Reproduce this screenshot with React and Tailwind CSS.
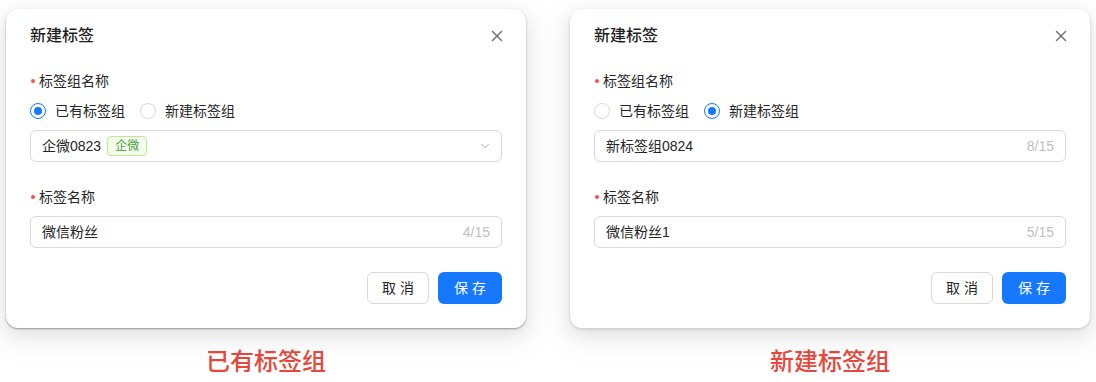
import { X, ChevronDown } from "lucide-react";

const FONT = { fontFamily: '"Liberation Sans", "Noto Sans CJK SC", sans-serif' };

const Radio = ({ checked, label }) => (
  <label className="flex items-center gap-[9px] text-[14px] leading-[22px] text-[#262626]">
    <span
      className={`flex items-center justify-center w-4 h-4 rounded-full border bg-white ${
        checked ? "border-[#1677ff]" : "border-[#d9d9d9]"
      }`}
    >
      {checked && <span className="w-2 h-2 rounded-full bg-[#1677ff]" />}
    </span>
    {label}
  </label>
);

const Label = ({ children }) => (
  <div className="flex items-center h-[22px] text-[14px] text-[#262626]">
    <span className="w-[4px] h-[4px] rounded-full bg-[#ff4d4f] mr-[4px] ml-[1px]" />
    {children}
  </div>
);

const TextInput = ({ value, count }) => (
  <div className="flex items-center justify-between h-8 px-[11px] border border-[#d9d9d9] rounded-md text-[14px] text-[#262626]">
    <span>{value}</span>
    <span className="text-[#bfbfbf]">{count}</span>
  </div>
);

const TagDialog = ({ existing, shadow }) => (
  <div className={`w-[520px] h-[319px] bg-white rounded-[12px] px-6 pt-4 pb-6 ${shadow}`}>
    <div className="flex items-center justify-between h-[22px]">
      <h3 className="text-[16px] font-medium text-[#1f1f1f]">新建标签</h3>
      <X size={18} strokeWidth={2} className="text-[#737373] mr-[-4px]" />
    </div>

    <div className="mt-[23px]">
      <Label>标签组名称</Label>
    </div>
    <div className="flex items-center gap-[15px] mt-2">
      <Radio checked={existing} label="已有标签组" />
      <Radio checked={!existing} label="新建标签组" />
    </div>
    <div className="mt-2">
      {existing ? (
        <div className="flex items-center justify-between h-8 px-[11px] border border-[#d9d9d9] rounded-md text-[14px] text-[#262626]">
          <div className="flex items-center">
            <span>企微0823</span>
            <span className="ml-[6px] px-[7px] h-[20px] leading-[18px] text-[12px] text-[#3f9f3f] bg-[#f6ffed] border border-[#b7eb8f] rounded-[4px]">
              企微
            </span>
          </div>
          <ChevronDown size={14} strokeWidth={1.5} className="text-[#a6a6a6] mr-[-2px]" />
        </div>
      ) : (
        <TextInput value="新标签组0824" count="8/15" />
      )}
    </div>

    <div className="mt-6">
      <Label>标签名称</Label>
    </div>
    <div className="mt-2">
      <TextInput value={existing ? "微信粉丝" : "微信粉丝1"} count={existing ? "4/15" : "5/15"} />
    </div>

    <div className="flex justify-end gap-[9px] mt-6">
      <button className="w-[62px] h-8 pl-[4px] border border-[#d9d9d9] rounded-md bg-white text-[14px] text-[#262626] tracking-[4px]">
        取消
      </button>
      <button className="w-16 h-8 pl-[4px] rounded-md bg-[#1677ff] text-[14px] text-white tracking-[4px]">
        保存
      </button>
    </div>
  </div>
);

export default function App() {
  return (
    <div className="w-[1096px] h-[382px] bg-white overflow-hidden" style={FONT}>
      <div className="flex gap-[44px] pl-[6px] pt-[9px]">
        <div className="flex flex-col items-center">
          <TagDialog
            existing
            shadow="shadow-[0_1px_2px_rgba(0,0,0,0.35),0_6px_16px_rgba(0,0,0,0.08),0_9px_28px_8px_rgba(0,0,0,0.05)]"
          />
          <div className="mt-[21px] text-[24px] leading-[26px] font-medium text-[#e8463a]">已有标签组</div>
        </div>
        <div className="flex flex-col items-center">
          <TagDialog
            existing={false}
            shadow="shadow-[0_1px_3px_rgba(0,0,0,0.15),0_6px_16px_rgba(0,0,0,0.08),0_9px_28px_8px_rgba(0,0,0,0.05)]"
          />
          <div className="mt-[21px] text-[24px] leading-[26px] font-medium text-[#e8463a]">新建标签组</div>
        </div>
      </div>
    </div>
  );
}
